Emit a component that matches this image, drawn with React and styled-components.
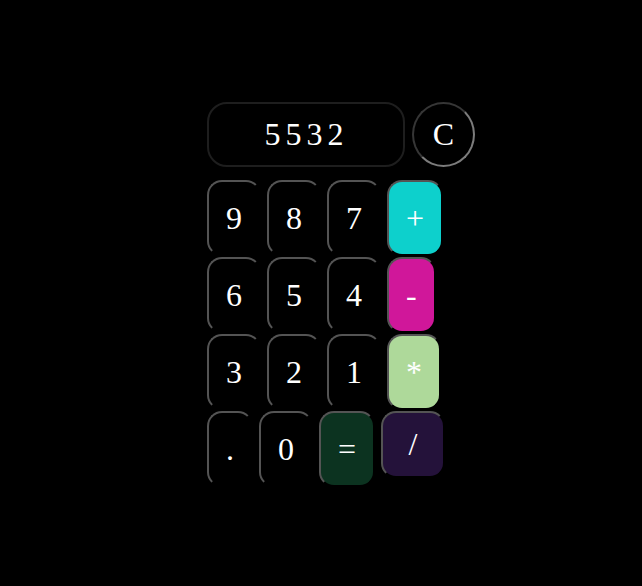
import React, { useState } from "react";
import styled, { createGlobalStyle } from "styled-components";

const Global = createGlobalStyle`
  html, body { margin: 0; padding: 0; background: #000; }
  body { font-family: "Liberation Serif", "Times New Roman", serif; color: #fff; }
`;

const Page = styled.div`
  min-height: 586px;
  background: #000;
  padding: 102px 0 0 207px;
  box-sizing: border-box;
`;

const Calculator = styled.div`
  width: 268px;
  display: flex;
  flex-direction: column;
  gap: 13px;
`;

const Top = styled.div`
  display: flex;
  gap: 7px;
`;

const Display = styled.div`
  width: 198px;
  height: 65px;
  box-sizing: border-box;
  border: 2px solid #1e1e1e;
  border-radius: 20px;
  display: flex;
  align-items: center;
  justify-content: center;
  font-size: 32px;
  letter-spacing: 5px;
  padding-left: 1px;
  color: #fff;
`;

const Clear = styled.button`
  width: 63px;
  height: 65px;
  box-sizing: border-box;
  border-radius: 50%;
  border: 2px solid;
  border-color: #363636 #7c7c7c #7c7c7c #363636;
  background: #000;
  color: #fff;
  font-family: "Liberation Serif", "Times New Roman", serif;
  font-size: 32px;
  padding: 0;
  cursor: pointer;
`;

const Keys = styled.div`
  display: flex;
  flex-wrap: wrap;
  column-gap: 6px;
  row-gap: 1px;
  align-items: flex-start;
`;

const Key = styled.button`
  box-sizing: border-box;
  font-family: "Liberation Serif", "Times New Roman", serif;
  font-size: 32px;
  line-height: normal;
  color: #fff;
  background: ${(p) => p.$bg || "#000"};
  padding: ${(p) => (p.$compact ? "13px 25.5px" : "17.5px 17px")};
  border: 2px solid;
  border-color: #545454 #000 #000 #545454;
  border-radius: 15px;
  cursor: pointer;
`;

const keys = [
  { k: "9" }, { k: "8" }, { k: "7" }, { k: "+", bg: "#0dd0cc" },
  { k: "6" }, { k: "5" }, { k: "4" }, { k: "-", bg: "#d0179a" },
  { k: "3" }, { k: "2" }, { k: "1" }, { k: "*", bg: "#aed99a" },
  { k: "." }, { k: "0" }, { k: "=", bg: "#0c3320" }, { k: "/", bg: "#24123a", compact: true },
];

export default function App() {
  const [value, setValue] = useState("5532");
  const press = (k) => {
    if (k === "=") {
      try {
        // eslint-disable-next-line no-new-func
        setValue(String(Function(`return (${value})`)()));
      } catch (e) {
        setValue("Error");
      }
    } else {
      setValue((v) => v + k);
    }
  };
  return (
    <Page>
      <Global />
      <Calculator>
        <Top>
          <Display>{value}</Display>
          <Clear onClick={() => setValue("")}>C</Clear>
        </Top>
        <Keys>
          {keys.map((b) => (
            <Key key={b.k} $bg={b.bg} $compact={b.compact} onClick={() => press(b.k)}>
              {b.k}
            </Key>
          ))}
        </Keys>
      </Calculator>
    </Page>
  );
}
